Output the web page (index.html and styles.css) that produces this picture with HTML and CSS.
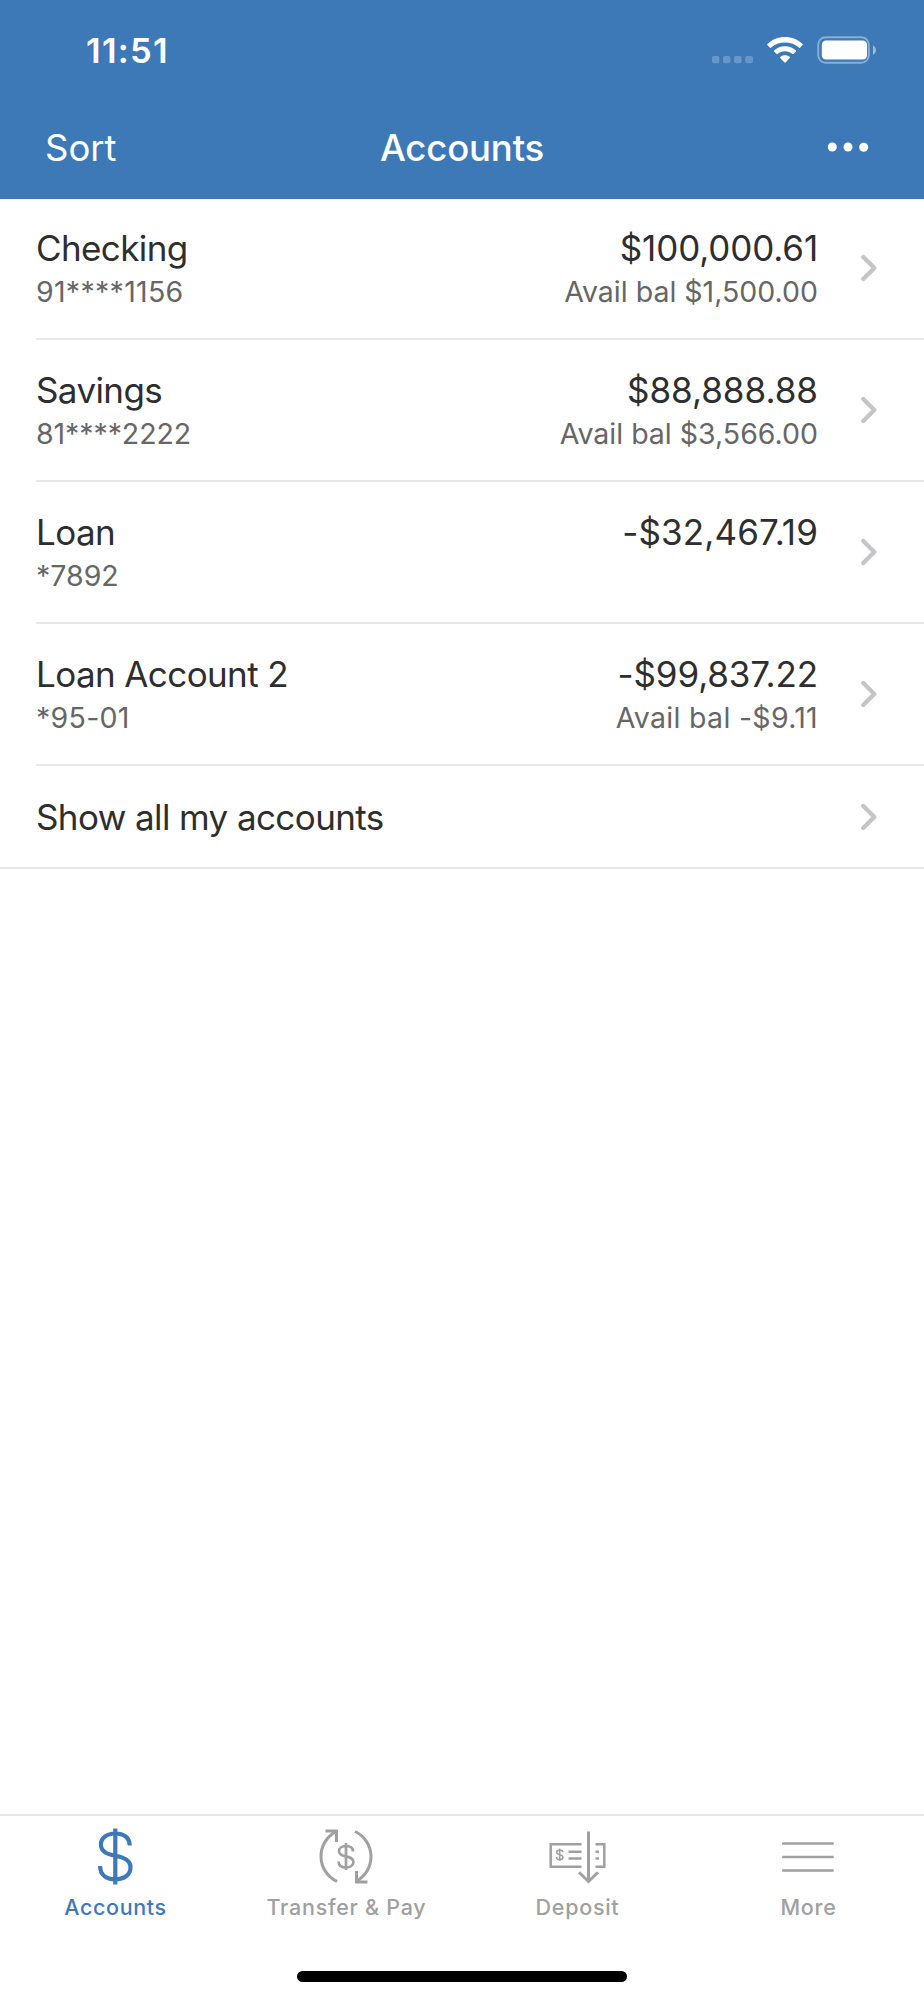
FILE: index.html
```html
<!DOCTYPE html>
<html lang="en">
<head>
<meta charset="utf-8">
<title>Accounts</title>
<link rel="stylesheet" href="styles.css">
</head>
<body>
<div class="screen">
  <header class="header">
    <div class="status">
      <span class="time">11:51</span>
      <svg class="status-icons" width="166" height="30" viewBox="0 0 166 30">
        <g fill="#fff" opacity=".22">
          <rect x="1" y="20" width="7.4" height="7.2" rx="2"/>
          <rect x="12" y="20" width="7.4" height="7.2" rx="2"/>
          <rect x="23" y="20" width="7.6" height="7.2" rx="2"/>
          <rect x="34.2" y="20" width="7.8" height="7.2" rx="2"/>
        </g>
        <path fill="#fff" d="M74 1c6.700 0 12.900 2.600 17.600 7.100q.5.500 0 1l-2.500 2.600q-.5.400-1 0C84.400 8.300 79.400 6.400 74 6.400s-10.400 1.900-14.100 5.300q-.5.400-1 0l-2.500-2.600q-.5-.5 0-1C61.100 3.600 67.300 1 74 1zM74 10.200c4.200 0 8 1.600 10.900 4.200q.5.500 0 1l-2.500 2.500q-.5.400-1 0c-2-1.700-4.600-2.700-7.400-2.700s-5.400 1-7.400 2.700q-.5.400-1 0l-2.500-2.500q-.5-.5 0-1C66 11.800 69.800 10.200 74 10.200zM74 19.200c1.900 0 3.500.600 4.800 1.700q.5.500 0 1l-4.300 4.500q-.5.500-1 0l-4.300-4.500q-.5-.5 0-1c1.300-1.100 2.900-1.700 4.800-1.700z"/>
        <rect x="107.200" y="1.200" width="50.600" height="25.600" rx="7.500" fill="none" stroke="#fff" stroke-opacity=".4" stroke-width="1.900"/>
        <rect x="110.800" y="4.600" width="45.200" height="19" rx="4.200" fill="#fff"/>
        <path fill="#fff" opacity=".5" d="M162 9.500c3.900 1.600 3.900 7.600 0 9.200z"/>
      </svg>
    </div>
    <div class="nav">
      <span class="nav-sort">Sort</span>
      <span class="nav-title">Accounts</span>
      <svg class="nav-more" width="42" height="10" viewBox="0 0 42 10">
        <g fill="#fff"><circle cx="5.300" cy="5" r="4.500"/><circle cx="21" cy="5" r="4.500"/><circle cx="36.700" cy="5.200" r="4.500"/></g>
      </svg>
    </div>
  </header>

  <main class="list">
    <div class="row row-first">
      <div class="info"><div class="name">Checking</div><div class="sub sub-wide">91****1156</div></div>
      <div class="amounts"><div class="amount amount-tight">$100,000.61</div><div class="sub">Avail bal $1,500.00</div></div>
      <svg class="chevron" width="18" height="28" viewBox="0 0 18 28"><path d="M3.300 3 14.300 14 3.300 25"/></svg>
    </div>
    <div class="row">
      <div class="info"><div class="name">Savings</div><div class="sub sub-tight">81****2222</div></div>
      <div class="amounts"><div class="amount">$88,888.88</div><div class="sub">Avail bal $3,566.00</div></div>
      <svg class="chevron" width="18" height="28" viewBox="0 0 18 28"><path d="M3.300 3 14.300 14 3.300 25"/></svg>
    </div>
    <div class="row">
      <div class="info"><div class="name">Loan</div><div class="sub">*7892</div></div>
      <div class="amounts"><div class="amount amount-wide">-$32,467.19</div></div>
      <svg class="chevron" width="18" height="28" viewBox="0 0 18 28"><path d="M3.300 3 14.300 14 3.300 25"/></svg>
    </div>
    <div class="row">
      <div class="info"><div class="name">Loan Account 2</div><div class="sub sub-wide">*95-01</div></div>
      <div class="amounts"><div class="amount amount-tight">-$99,837.22</div><div class="sub sub-wide">Avail bal -$9.11</div></div>
      <svg class="chevron" width="18" height="28" viewBox="0 0 18 28"><path d="M3.300 3 14.300 14 3.300 25"/></svg>
    </div>
    <div class="row row-all">
      <div class="info"><div class="name">Show all my accounts</div></div>
      <svg class="chevron" width="18" height="28" viewBox="0 0 18 28"><path d="M3.300 3 14.300 14 3.300 25"/></svg>
    </div>
  </main>

  <footer class="tabs">
    <div class="tab tab-active">
      <svg width="60" height="60" viewBox="0 0 60 60" fill="none" stroke="currentColor" stroke-width="4.200">
        <path d="M30.300 2.500V58.500M44.700 19.500C44.700 11.500 38.700 7.500 30.300 7.500 21.500 7.500 15.900 12.300 15.900 18.500 15.900 25.700 22 28 30.300 29.700 39 31.500 45.500 34 45.500 41.500 45.500 48.500 39.500 53.300 30.300 53.300 21 53.300 15.100 48.700 15.100 40"/>
      </svg>
      <span class="label label-active">Accounts</span>
    </div>
    <div class="tab">
      <svg width="60" height="60" viewBox="0 0 60 60" fill="none" stroke="currentColor" stroke-width="3">
        <path d="M21 55.500C11.500 51 5 41.500 5 30.500 5 20 10.500 11.500 19.500 5.500M39 5.500C48.500 10 55 19.500 55 30.500 55 41 49.500 49.500 40.500 55.500"/>
        <path d="M9.500 5H20.500V16M51.500 56H40.500V45"/>
        <path stroke-width="2.700" d="M30 17V44M37 25.500C37 21.800 34 20 30 20 25.800 20 23 22.200 23 25.200 23 28.600 26 29.600 30 30.400 34.300 31.300 37.400 32.500 37.400 36 37.400 39.400 34.300 41.500 30 41.500 25.600 41.500 22.600 39.400 22.600 35.500"/>
      </svg>
      <span class="label">Transfer &amp; Pay</span>
    </div>
    <div class="tab">
      <svg width="60" height="60" viewBox="0 0 60 60" fill="none" stroke="currentColor" stroke-width="2.500">
        <path d="M34.500 18.200H3.700V40.800H34.500M48.500 18.200H57.300V40.800H48.500"/>
        <path stroke-width="3" d="M41.500 5.500V55.500M32 46.200 41.500 55.500 51 46.200"/>
        <path d="M21.500 25.700H34.500M21.500 32.500H34.500M48.500 25.700H52M48.500 32.500H52"/>
        <path stroke-width="1.500" d="M12.700 22.500V35M15.900 26.300C15.900 24.600 14.500 23.900 12.700 23.900 10.800 23.900 9.600 24.900 9.600 26.300 9.600 28 11 28.300 12.700 28.700 14.600 29.100 16 29.600 16 31.200 16 32.800 14.600 33.700 12.700 33.700 10.700 33.700 9.400 32.800 9.400 31"/>
      </svg>
      <span class="label">Deposit</span>
    </div>
    <div class="tab">
      <svg width="60" height="60" viewBox="0 0 60 60" fill="none" stroke="currentColor" stroke-width="2.600">
        <path d="M4.200 17.500H55.700M4.200 31H55.700M4.200 44.500H55.700"/>
      </svg>
      <span class="label">More</span>
    </div>
  </footer>
  <div class="home"></div>
</div>
</body>
</html>
```
FILE: styles.css
```css
body {
  margin: 0;
  background: #fff;
}

.screen {
  display: flex;
  flex-direction: column;
  width: 924px;
  height: 2000px;
  overflow: hidden;
  background: #fff;
  color: #2e2e2e;
  font-family: Inter, "Liberation Sans", sans-serif;
}

.header {
  height: 199px;
  background: #3e79b7;
  color: #fff;
}

.status {
  display: flex;
  justify-content: space-between;
  align-items: flex-start;
  box-sizing: border-box;
  height: 100px;
  padding: 29px 47px 0 86px;
}

.time {
  font-size: 34.500px;
  line-height: 44px;
  font-weight: 600;
  letter-spacing: 1.300px;
}

.status-icons {
  margin-top: 7px;
}

.nav {
  display: grid;
  grid-template-columns: 1fr auto 1fr;
  align-items: center;
  height: 96px;
  padding: 0 45px;
  line-height: 48px;
}

.nav-sort {
  font-size: 36.500px;
}

.nav-title {
  font-size: 36.500px;
  font-weight: 500;
  letter-spacing: -0.150px;
}

.nav-more {
  justify-self: end;
  margin: 0 10px 2px 0;
}

.row {
  display: flex;
  box-sizing: border-box;
  height: 142px;
  margin-left: 36px;
  padding: 28px 46px 0 0;
  border-bottom: 2px solid #e8e8e8;
}

.row-first {
  height: 141px;
  padding-top: 27px;
}

.row-all {
  height: 103px;
  margin-left: 0;
  padding: 29px 46px 0 36px;
}

.info {
  flex: 1;
}

.amounts {
  text-align: right;
}

.name,
.amount {
  font-size: 35px;
  line-height: 44px;
  white-space: nowrap;
}

.name {
  letter-spacing: -0.600px;
}

.amount-tight {
  letter-spacing: -0.130px;
}

.amount-wide {
  letter-spacing: 0.120px;
}

.sub {
  color: #666;
  font-size: 28.500px;
  line-height: 44px;
  white-space: nowrap;
}

.sub-wide {
  letter-spacing: 0.300px;
}

.sub-tight {
  letter-spacing: -0.080px;
}

.chevron {
  margin: 28px 0 0 42px;
  fill: none;
  stroke: #c5c5c7;
  stroke-width: 4.300;
  stroke-linecap: round;
  stroke-linejoin: round;
}

.row-all .chevron {
  margin-top: 8px;
}

.tabs {
  display: grid;
  grid-template-columns: repeat(4, 1fr);
  height: 147px;
  margin-top: auto;
  border-top: 2px solid #e8e8e8;
  color: #a0a0a0;
}

.tab {
  display: flex;
  flex-direction: column;
  align-items: center;
  padding-top: 10px;
}

.tab svg {
  margin-right: 2px;
}

.tab-active {
  color: #3e79b7;
}

.label {
  margin-top: 6px;
  font-size: 21.500px;
  line-height: 30px;
  font-weight: 500;
  letter-spacing: 0.720px;
  white-space: nowrap;
}

.label-active {
  letter-spacing: 0.600px;
}

.home {
  width: 330px;
  height: 11px;
  margin: 8px auto 18px;
  border-radius: 6px;
  background: #000;
}
```
